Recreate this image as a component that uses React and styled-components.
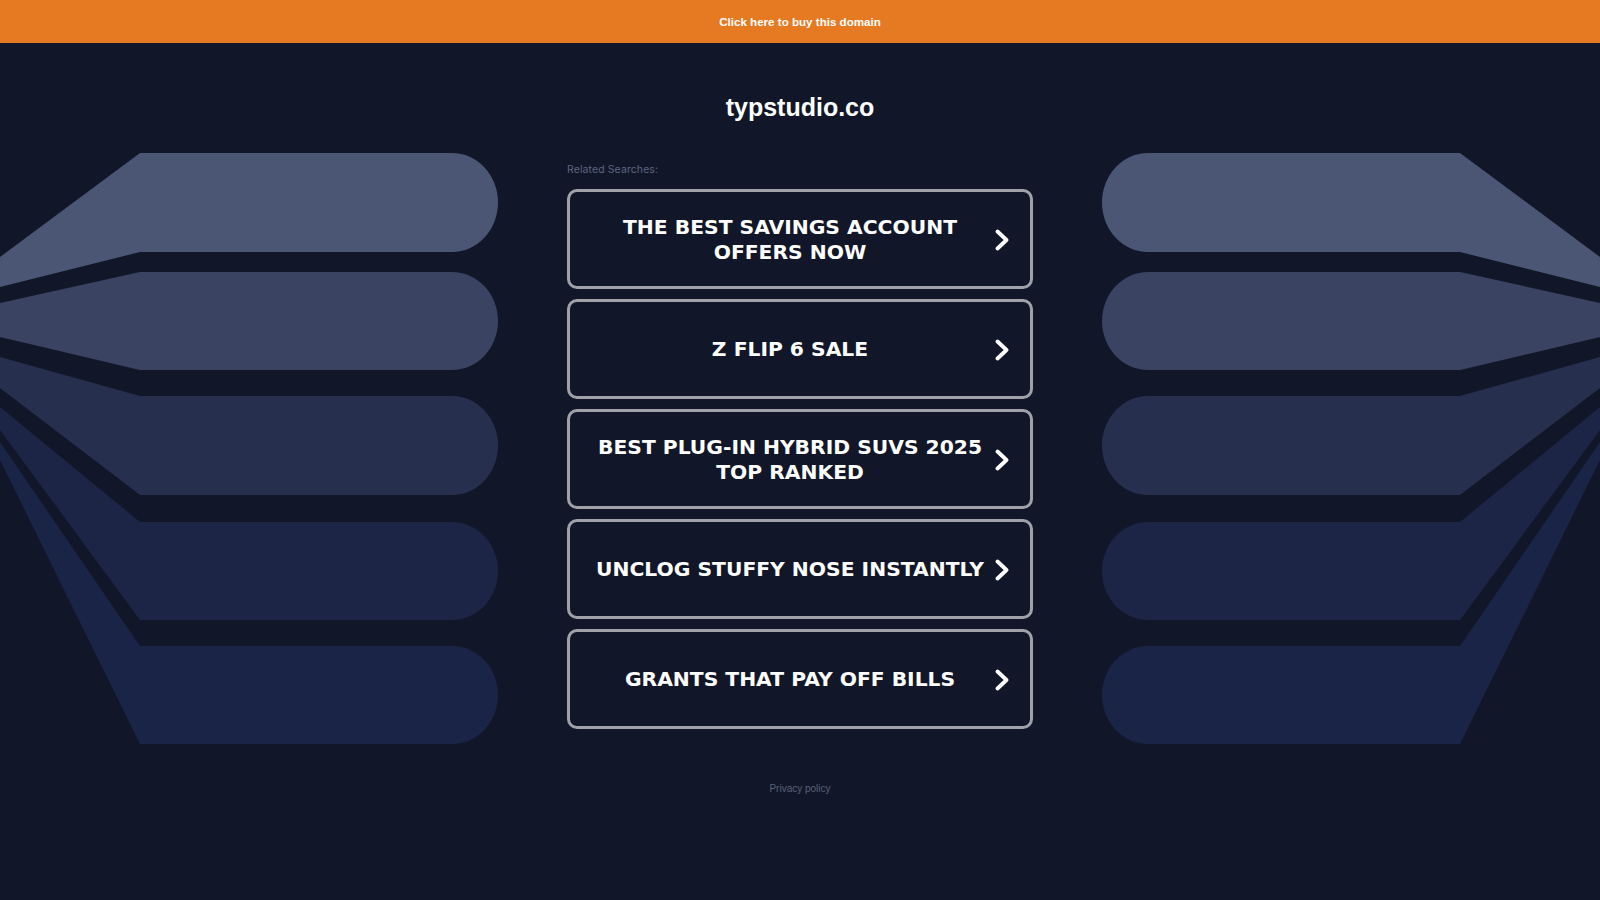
import React from "react";
import styled, {createGlobalStyle} from "styled-components";

const GlobalStyle = createGlobalStyle`
  html, body {
    margin: 0;
    padding: 0;
    background: #111729;
  }
  body {
    min-height: 100vh;
    font-family: "Liberation Sans", Arial, sans-serif;
  }
`;

const Page = styled.div`
  min-height: 900px;
  background: #111729;
  overflow: hidden;
`;

const TopBar = styled.div`
  height: 43px;
  background: #e57a22;
  display: flex;
  align-items: center;
  justify-content: center;
`;

const BuyLink = styled.a`
  color: #fff;
  font-family: "Liberation Sans", Arial, sans-serif;
  font-weight: bold;
  font-size: 11.6px;
  text-decoration: none;
  cursor: pointer;
`;

const Domain = styled.h1`
  margin: 49px 0 0;
  color: #fff;
  font-family: "Liberation Sans", Arial, sans-serif;
  font-weight: bold;
  font-size: 25px;
  line-height: 30px;
  text-align: center;
`;

const Stage = styled.div`
  margin-top: 28px;
  display: flex;
  justify-content: space-between;
  align-items: flex-start;
`;

const Decor = styled.svg`
  display: block;
  width: 498px;
  height: 600px;
  flex: none;
  transform: ${p => (p.$flip ? "scaleX(-1)" : "none")};
`;

const Column = styled.div`
  width: 466px;
  flex: none;
  padding-top: 14px;
`;

const Label = styled.div`
  font-family: Inter, "Noto Sans", sans-serif;
  font-size: 10.4px;
  letter-spacing: 0.15px;
  line-height: 12px;
  color: #5e6580;
`;

const List = styled.div`
  margin-top: 13px;
  display: flex;
  flex-direction: column;
  gap: 10px;
`;

const SearchLink = styled.a`
  box-sizing: border-box;
  height: 100px;
  border: 3px solid #a1a1a9;
  border-radius: 10px;
  padding: 1px 21px 0 21px;
  display: flex;
  align-items: center;
  color: #fff;
  text-decoration: none;
  cursor: pointer;
`;

const SearchText = styled.span`
  flex: 1;
  text-align: center;
  font-family: "DejaVu Sans", Verdana, sans-serif;
  font-weight: bold;
  font-size: 20.3px;
  line-height: 24.5px;
`;

const Chevron = styled.svg`
  flex: none;
  width: 14px;
  height: 22px;
  margin-left: 6px;
`;

const Footer = styled.div`
  margin-top: 28px;
  text-align: center;
`;

const Privacy = styled.a`
  font-family: "Liberation Sans", Arial, sans-serif;
  font-size: 10px;
  line-height: 12px;
  color: #596079;
  text-decoration: none;
`;

// [y top at x=0, y bottom at x=0, y top at x=140, y bottom at x=140, colour]
const bands = [
  [107, 137, 3, 102, "#4b5675"],
  [153, 187, 122, 220, "#3a4362"],
  [207, 238, 246, 345, "#262f4d"],
  [257, 280, 372, 470, "#1c2546"],
  [292, 310, 496, 594, "#1a2446"],
];

const bandPath = ([t0, b0, t, b]) => {
  const ry = (b - t) / 2;
  const rx = 46;
  return `M0 ${t0} L140 ${t} L${498 - rx} ${t} A${rx} ${ry} 0 0 1 ${498 - rx} ${b} L140 ${b} L0 ${b0} Z`;
};

function Fan({flip}) {
  return (
    <Decor $flip={flip} viewBox="0 0 498 600" aria-hidden="true">
      {bands.map((band, i) => (
        <path key={i} d={bandPath(band)} fill={band[4]}/>
      ))}
    </Decor>
  );
}

const searches = [
  ["THE BEST SAVINGS ACCOUNT", "OFFERS NOW"],
  ["Z FLIP 6 SALE"],
  ["BEST PLUG-IN HYBRID SUVS 2025", "TOP RANKED"],
  ["UNCLOG STUFFY NOSE INSTANTLY"],
  ["GRANTS THAT PAY OFF BILLS"],
];

export default function App() {
  return (
    <Page>
      <GlobalStyle/>
      <TopBar>
        <BuyLink>Click here to buy this domain</BuyLink>
      </TopBar>
      <Domain>typstudio.co</Domain>
      <Stage>
        <Fan/>
        <Column>
          <Label>Related Searches:</Label>
          <List>
            {searches.map((lines, i) => (
              <SearchLink key={i}>
                <SearchText>
                  {lines.map((l, j) => (
                    <React.Fragment key={j}>
                      {j > 0 && <br/>}
                      {l}
                    </React.Fragment>
                  ))}
                </SearchText>
                <Chevron viewBox="0 0 14 22">
                  <path d="M2.5 2.5 L11.5 11 L2.5 19.5" fill="none" stroke="#fff"
                        strokeWidth="3.8" strokeLinecap="round" strokeLinejoin="round"/>
                </Chevron>
              </SearchLink>
            ))}
          </List>
        </Column>
        <Fan flip/>
      </Stage>
      <Footer>
        <Privacy>Privacy policy</Privacy>
      </Footer>
    </Page>
  );
}
